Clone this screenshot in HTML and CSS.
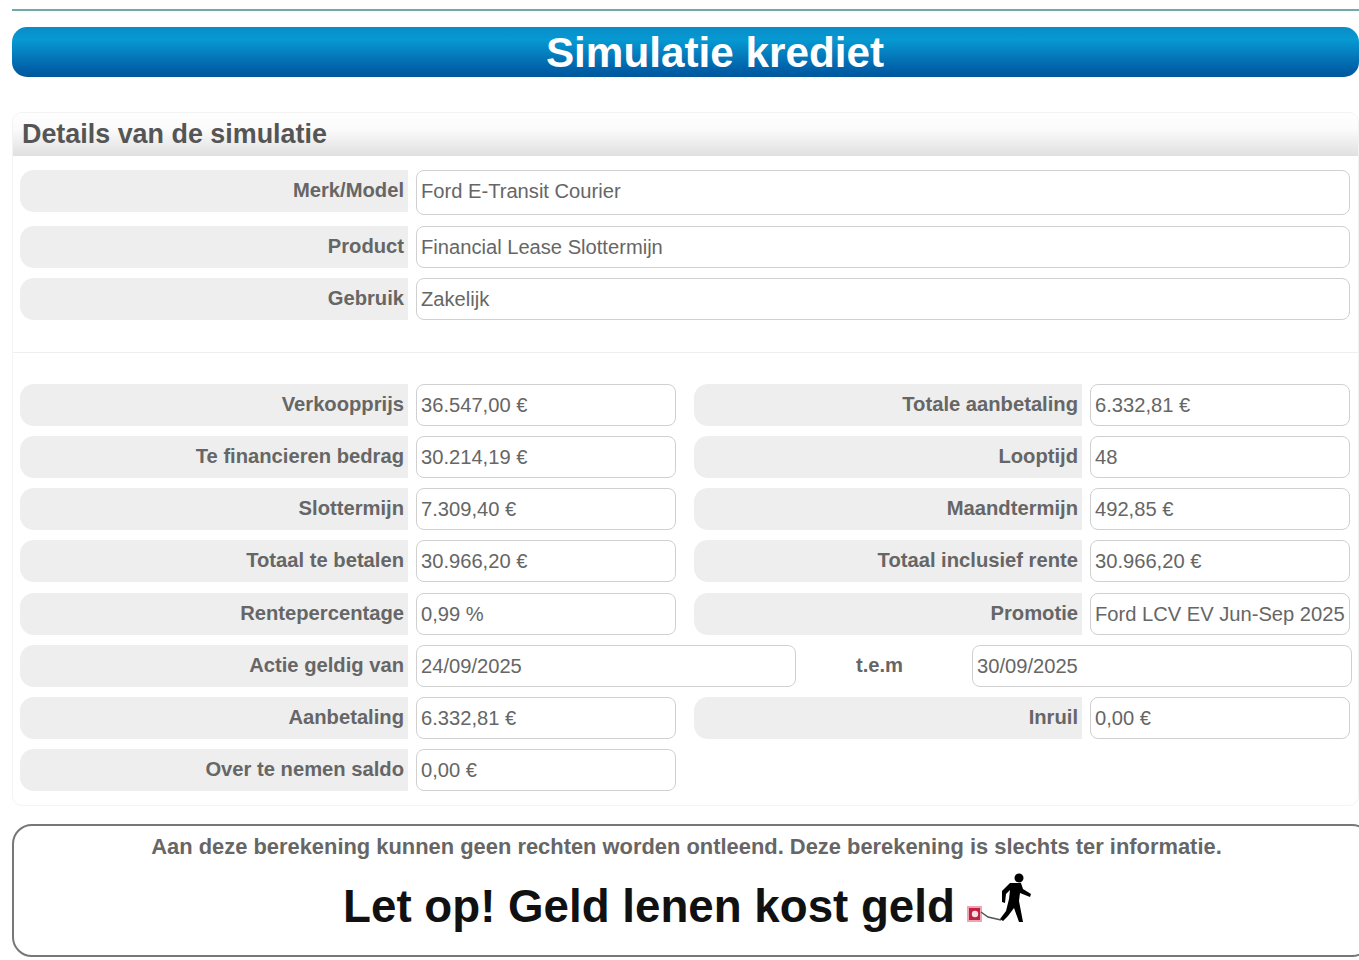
FILE: index.html
```html
<!DOCTYPE html>
<html lang="nl">
<head>
<meta charset="utf-8">
<title>Simulatie krediet</title>
<link rel="stylesheet" href="styles.css">
</head>
<body>
<div class="page">
  <div class="rule"></div>
  <h1 class="title">Simulatie krediet</h1>
  <section class="panel">
    <h2 class="panel-head">Details van de simulatie</h2>
    <div class="top-rows">
      <div class="row row-first"><div class="label">Merk/Model</div><div class="field field-full">Ford E-Transit Courier</div></div>
      <div class="row row-second"><div class="label">Product</div><div class="field field-full">Financial Lease Slottermijn</div></div>
      <div class="row"><div class="label">Gebruik</div><div class="field field-full">Zakelijk</div></div>
    </div>
    <hr class="divider">
    <div class="rows">
      <div class="row"><div class="label">Verkoopprijs</div><div class="field">36.547,00 €</div><div class="label label-right">Totale aanbetaling</div><div class="field">6.332,81 €</div></div>
      <div class="row"><div class="label">Te financieren bedrag</div><div class="field">30.214,19 €</div><div class="label label-right">Looptijd</div><div class="field">48</div></div>
      <div class="row"><div class="label">Slottermijn</div><div class="field">7.309,40 €</div><div class="label label-right">Maandtermijn</div><div class="field">492,85 €</div></div>
      <div class="row"><div class="label">Totaal te betalen</div><div class="field">30.966,20 €</div><div class="label label-right">Totaal inclusief rente</div><div class="field">30.966,20 €</div></div>
      <div class="row"><div class="label">Rentepercentage</div><div class="field">0,99 %</div><div class="label label-right">Promotie</div><div class="field">Ford LCV EV Jun-Sep 2025</div></div>
      <div class="row"><div class="label">Actie geldig van</div><div class="field field-wide">24/09/2025</div><div class="tem">t.e.m</div><div class="field field-wide">30/09/2025</div></div>
      <div class="row"><div class="label">Aanbetaling</div><div class="field">6.332,81 €</div><div class="label label-right">Inruil</div><div class="field">0,00 €</div></div>
      <div class="row"><div class="label">Over te nemen saldo</div><div class="field">0,00 €</div></div>
    </div>
  </section>
  <section class="notice">
    <p class="notice-text">Aan deze berekening kunnen geen rechten worden ontleend. Deze berekening is slechts ter informatie.</p>
    <div class="warning">
      <span class="warning-text">Let op! Geld lenen kost geld</span>
      <svg class="walker" width="66" height="50" viewBox="0 0 66 50" aria-hidden="true">
        <rect x="0" y="33" width="15" height="16" fill="#eaa6b6"/>
        <rect x="2" y="35" width="11" height="12" fill="#c4203f"/>
        <circle cx="8" cy="41" r="3.200" fill="#f7dfe4"/>
        <path d="M14 39 L21 44 L34 47" fill="none" stroke="#555" stroke-width="1.500"/>
        <circle cx="52" cy="5" r="4.500" fill="#000"/>
        <path d="M43 10 L54 10 L56 16 L64 21 L63 24 L53 20 L52 28 L56 49 L52 49 L47 35 L41 43 L36 48 L33 46 L39 38 L42 26 L43 17 L39 21 L38 30 L35 29 L35 18 Z" fill="#000"/>
      </svg>
    </div>
  </section>
</div>
</body>
</html>
```
FILE: styles.css
```css
* { box-sizing: border-box; }
html, body { margin: 0; padding: 0; background: #fff; overflow: hidden; }
body { font-family: "Liberation Sans", Arial, sans-serif; color: #555; }
.page { width: 1359px; height: 960px; padding: 9px 0 0 12px; overflow: hidden; }
.rule { height: 2px; background: #6fa9a9; }
.title {
  margin: 16px 0 0;
  height: 50px;
  line-height: 52px;
  border-radius: 15px;
  background: linear-gradient(#0a8cc6 0%, #0699d2 25%, #0476b8 62%, #0060a8 85%, #00589c 100%);
  color: #fff;
  font-size: 42.250px;
  font-weight: bold;
  text-align: center;
  padding-left: 59px;
}
.panel {
  margin-top: 35px;
  height: 694px;
  border: 1px solid #f3f3f3;
  border-radius: 10px;
  overflow: hidden;
}
.panel-head {
  margin: 0;
  height: 43px;
  line-height: 43px;
  padding-left: 9px;
  font-size: 26.900px;
  font-weight: bold;
  color: #555;
  background: linear-gradient(#fff 0%, #fafafa 40%, #e0e0e0 100%);
}
.top-rows { padding: 14px 0 0 7px; }
.row { display: flex; gap: 8px; height: 42px; margin-bottom: 10.140px; }
.row-first { height: 45px; margin-bottom: 11px; }
.row-second { height: 42px; margin-bottom: 10px; }
.rows { padding-left: 7px; }
.label {
  flex: none;
  width: 388px;
  height: 42px;
  padding: 0 4px 0 0;
  line-height: 41px;
  text-align: right;
  background: #eee;
  border-radius: 14px 0 0 14px;
  font-size: 20.200px;
  font-weight: bold;
  color: #666;
}
.label-right { margin-left: 10px; }
.field {
  flex: none;
  width: 260px;
  height: 100%;
  padding-left: 4px;
  border: 1px solid #d0d0d0;
  border-radius: 8px;
  background: #fff;
  font-size: 20.150px;
  line-height: 41px;
  color: #666;
  white-space: nowrap;
}
.field-full { width: 934px; }
.field-wide { width: 380px; }
.tem {
  flex: none;
  width: 160px;
  padding-right: 9px;
  text-align: center;
  font-size: 20.200px;
  font-weight: bold;
  line-height: 41px;
  color: #666;
}
.divider { margin: 32px 0 31px; border: 0; border-top: 1px solid #eee; }
.notice {
  margin-top: 18px;
  height: 133px;
  width: 1360px;
  border: 2px solid #777;
  border-radius: 20px;
  text-align: center;
  overflow: hidden;
}
.notice-text { margin: 6px 0 0; font-size: 21.900px; line-height: 30px; font-weight: bold; color: #666; padding-right: 11px; }
.warning { display: flex; justify-content: center; align-items: flex-end; margin-top: 7px; padding-right: 8px; height: 67px; }
.warning-text { font-size: 45.700px; line-height: 58px; font-weight: bold; color: #111; }
.walker { flex: none; margin: 0 0 13px 12px; }
```
